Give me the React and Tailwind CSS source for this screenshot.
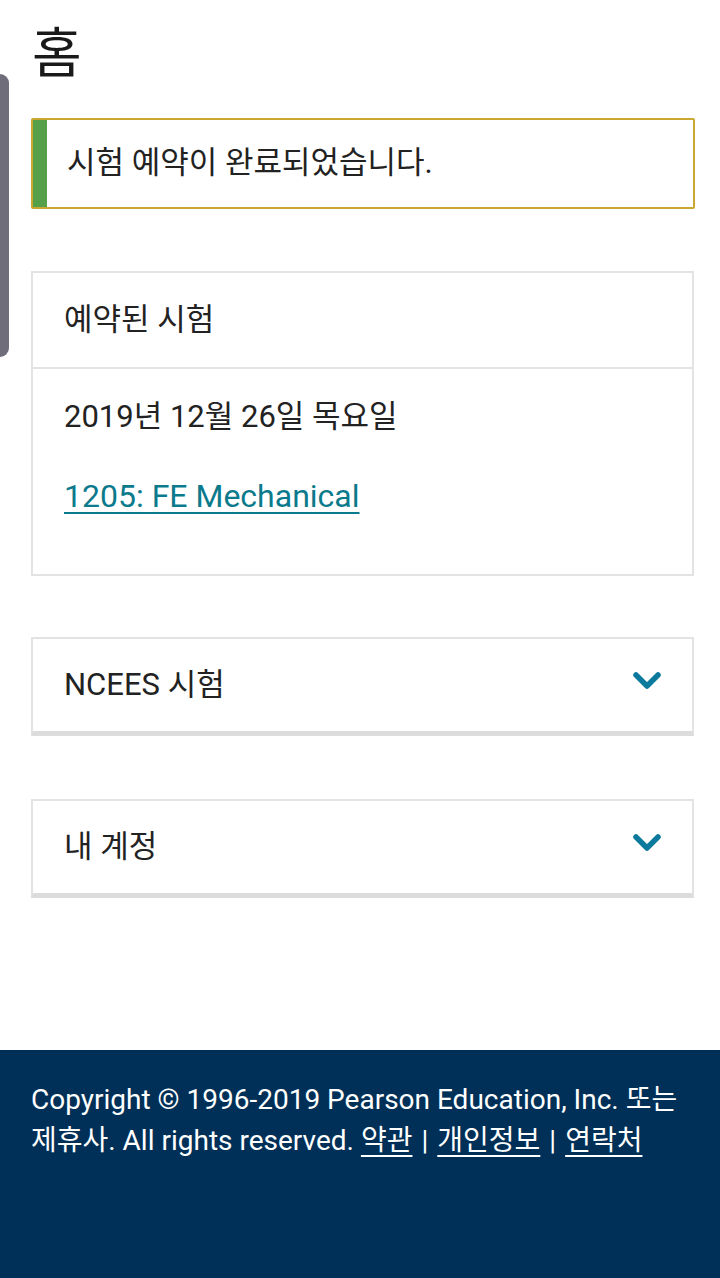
import React from "react";

const font = { fontFamily: '"Roboto", "Noto Sans CJK KR", sans-serif' };

function Chevron() {
  return (
    <svg width="30" height="20" viewBox="0 0 30 20" className="shrink-0">
      <path d="M4 4 L15 15 L26 4" fill="none" stroke="#0b7a9c" strokeWidth="5.5" strokeLinecap="round" strokeLinejoin="round" />
    </svg>
  );
}

function Accordion({ title }) {
  return (
    <div className="border-2 border-[#e3e3e3] border-b-[5px] border-b-[#dcdcdc] h-[99px] flex items-center justify-between pl-[31px] pr-[30px]">
      <span className="text-[31px] text-[#222]">{title}</span>
      <div className="-mt-[8px]"><Chevron /></div>
    </div>
  );
}

export default function App() {
  return (
    <div className="relative min-h-[1278px] flex flex-col bg-white" style={font}>
      <div className="absolute left-0 top-[74px] w-[9px] h-[283px] bg-[#6e6d79] rounded-r-[9px]" />
      <main className="flex-1 pl-[31px] pr-[25px] pt-[19px] pb-[152px]">
        <h1 className="text-[54px] leading-[72px] text-[#1a1a1a] pl-[1px]">홈</h1>
        <div className="mt-[27px] h-[91px] border-2 border-[#c9a731] rounded-[2px] flex overflow-hidden">
          <div className="w-[14px] bg-[#57a04a]" />
          <div className="flex items-center pl-[20px] text-[31px] text-[#222]">시험 예약이 완료되었습니다.</div>
        </div>

        <div className="mt-[62px] border-2 border-[#e3e3e3] mr-[1px]">
          <div className="h-[96px] flex items-center pl-[31px] text-[31px] text-[#222] border-b-2 border-[#e3e3e3]">예약된 시험</div>
          <div className="h-[205px] pl-[31px] pt-[28px]">
            <div className="text-[31px] leading-[40px] text-[#222]">2019년 12월 26일 목요일</div>
            <a href="#" className="inline-block mt-[39px] text-[32px] leading-[40px] text-[#0b7a8c] underline underline-offset-[5px] decoration-2">
              1205: FE Mechanical
            </a>
          </div>
        </div>

        <div className="mt-[61px] mr-[1px]"><Accordion title="NCEES 시험" /></div>
        <div className="mt-[63px] mr-[1px]"><Accordion title="내 계정" /></div>
      </main>
      <footer className="bg-[#003057] h-[229px] px-[31px] pt-[29px] text-white text-[28px] leading-[41px] break-keep">
        <p>
          Copyright © 1996-2019 Pearson Education, Inc. 또는 제휴사. All rights reserved.{" "}
          <a href="#" className="underline underline-offset-[5px]">약관</a>
          <span className="mx-[9px]">|</span>
          <a href="#" className="underline underline-offset-[5px]">개인정보</a>
          <span className="mx-[9px]">|</span>
          <a href="#" className="underline underline-offset-[5px]">연락처</a>
        </p>
      </footer>
    </div>
  );
}
